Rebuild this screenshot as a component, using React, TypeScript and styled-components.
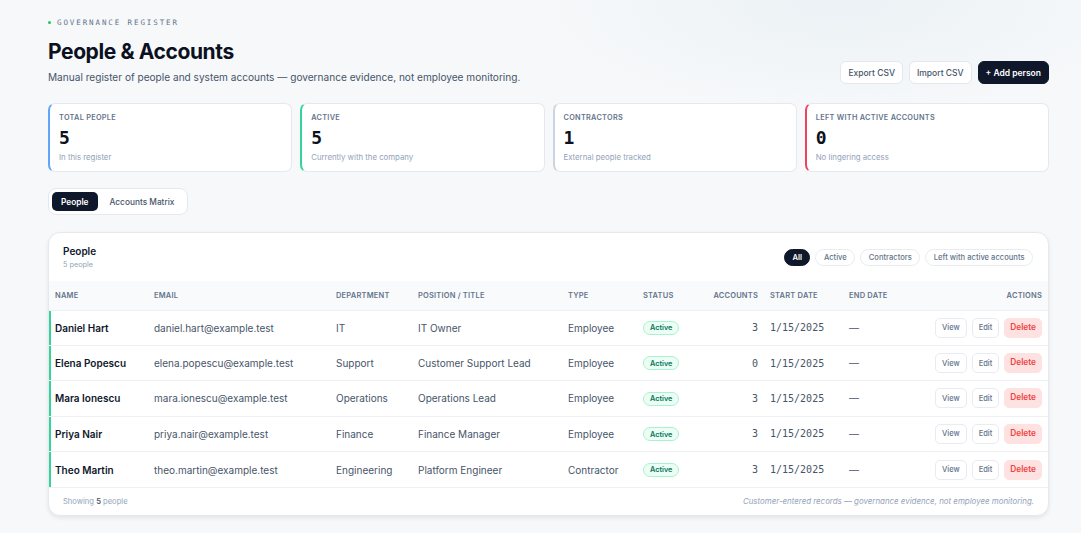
import * as React from 'react';
import styled, { createGlobalStyle } from 'styled-components';

const GlobalStyle = createGlobalStyle`
  html, body {
    margin: 0;
    padding: 0;
  }
  body {
    font-family: Inter, 'Noto Sans', sans-serif;
    background: #f6f8fa;
    color: #0f172a;
  }
  * {
    box-sizing: border-box;
  }
`;

type Person = {
  name: string;
  email: string;
  department: string;
  position: string;
  type: string;
  accounts: number;
  start: string;
};

const people: Person[] = [
  { name: 'Daniel Hart', email: 'daniel.hart@example.test', department: 'IT', position: 'IT Owner', type: 'Employee', accounts: 3, start: '1/15/2025' },
  { name: 'Elena Popescu', email: 'elena.popescu@example.test', department: 'Support', position: 'Customer Support Lead', type: 'Employee', accounts: 0, start: '1/15/2025' },
  { name: 'Mara Ionescu', email: 'mara.ionescu@example.test', department: 'Operations', position: 'Operations Lead', type: 'Employee', accounts: 3, start: '1/15/2025' },
  { name: 'Priya Nair', email: 'priya.nair@example.test', department: 'Finance', position: 'Finance Manager', type: 'Employee', accounts: 3, start: '1/15/2025' },
  { name: 'Theo Martin', email: 'theo.martin@example.test', department: 'Engineering', position: 'Platform Engineer', type: 'Contractor', accounts: 3, start: '1/15/2025' },
];

const stats = [
  { label: 'Total people', value: '5', sub: 'In this register', accent: '#60a5fa' },
  { label: 'Active', value: '5', sub: 'Currently with the company', accent: '#34d399' },
  { label: 'Contractors', value: '1', sub: 'External people tracked', accent: '#cbd5e1' },
  { label: 'Left with active accounts', value: '0', sub: 'No lingering access', accent: '#f43f5e' },
];

const filters = ['All', 'Active', 'Contractors', 'Left with active accounts'];

const mono = `'DejaVu Sans Mono', 'Liberation Mono', monospace`;

const StyledPage = styled.div`
  min-height: 533px;
  padding: 16px 32px 18px 48px;
  background:
    radial-gradient(ellipse 420px 160px at 78% 0%, rgba(226, 236, 240, 0.55), transparent 70%),
    #f6f8fa;
`;

const StyledTop = styled.div`
  display: flex;
  justify-content: space-between;
  align-items: flex-end;
`;

const StyledEyebrow = styled.div`
  display: flex;
  align-items: center;
  gap: 6px;
  font-family: ${mono};
  font-size: 7.5px;
  letter-spacing: 1.9px;
  color: #64748b;
  height: 13px;

  &::before {
    content: '';
    width: 3px;
    height: 3px;
    border-radius: 50%;
    background: #22c55e;
  }
`;

const StyledTitle = styled.h1`
  margin: 10px 0 0;
  font-size: 21px;
  font-weight: 700;
  letter-spacing: -0.4px;
  color: #0b1120;
  line-height: 26px;
`;

const StyledSubtitle = styled.p`
  margin: 5px 0 0;
  font-size: 10.1px;
  color: #475569;
  line-height: 14px;
`;

const StyledActions = styled.div`
  display: flex;
  gap: 6px;
`;

const StyledButton = styled.button<{ primary?: boolean }>`
  height: 23px;
  padding: 0 7px;
  border-radius: 6px;
  font-family: Inter, sans-serif;
  font-size: 8.5px;
  font-weight: ${({ primary }) => (primary ? 600 : 500)};
  border: 1px solid ${({ primary }) => (primary ? '#0f172a' : '#e5e7eb')};
  background: ${({ primary }) => (primary ? '#0f172a' : '#ffffff')};
  color: ${({ primary }) => (primary ? '#ffffff' : '#475569')};
`;

const StyledStats = styled.div`
  display: grid;
  grid-template-columns: repeat(4, 1fr);
  gap: 8px;
  margin-top: 19px;
`;

const StyledStatCard = styled.div<{ accent: string }>`
  height: 69px;
  background: #ffffff;
  border: 1px solid #e5e9ef;
  border-left: 2px solid ${({ accent }) => accent};
  border-radius: 7px;
  padding: 9px 9px;
`;

const StyledStatLabel = styled.div`
  font-size: 7.3px;
  font-weight: 600;
  letter-spacing: 0.3px;
  text-transform: uppercase;
  color: #64748b;
  line-height: 10px;
`;

const StyledStatValue = styled.div`
  font-family: ${mono};
  font-size: 18px;
  font-weight: 700;
  color: #0b1120;
  line-height: 22px;
  margin-top: 4px;
`;

const StyledStatSub = styled.div`
  font-size: 7.8px;
  color: #94a3b8;
  line-height: 10px;
  margin-top: 3px;
`;

const StyledTabs = styled.div`
  display: inline-flex;
  gap: 2px;
  margin-top: 16px;
  padding: 3px;
  background: #ffffff;
  border: 1px solid #e5e9ef;
  border-radius: 8px;
`;

const StyledTab = styled.div<{ active?: boolean }>`
  height: 19px;
  display: flex;
  align-items: center;
  padding: 0 ${({ active }) => (active ? '9px' : '10px')};
  border-radius: 5px;
  font-size: 8.3px;
  font-weight: ${({ active }) => (active ? 600 : 500)};
  background: ${({ active }) => (active ? '#0f172a' : 'transparent')};
  color: ${({ active }) => (active ? '#ffffff' : '#475569')};
`;

const StyledTableCard = styled.div`
  margin-top: 17px;
  background: #ffffff;
  border: 1px solid #e5e9ef;
  border-radius: 12px;
  box-shadow: 0 2px 4px rgba(15, 23, 42, 0.08);
  overflow: hidden;
`;

const StyledCardHeader = styled.div`
  display: flex;
  justify-content: space-between;
  align-items: center;
  padding: 12px 15px 11px 14px;
`;

const StyledCardTitle = styled.div`
  font-size: 10px;
  font-weight: 600;
  color: #0f172a;
  line-height: 13px;
`;

const StyledCardSub = styled.div`
  font-size: 7.3px;
  color: #94a3b8;
  line-height: 10px;
  margin-top: 2px;
`;

const StyledChips = styled.div`
  display: flex;
  gap: 5px;
`;

const StyledChip = styled.div<{ active?: boolean }>`
  height: 17px;
  display: flex;
  align-items: center;
  padding: 0 7.5px;
  border-radius: 9px;
  font-size: 7.6px;
  font-weight: ${({ active }) => (active ? 600 : 500)};
  border: 1px solid ${({ active }) => (active ? '#0f172a' : '#e8ebf0')};
  background: ${({ active }) => (active ? '#0f172a' : '#ffffff')};
  color: ${({ active }) => (active ? '#ffffff' : '#64748b')};
`;

const StyledTable = styled.table`
  width: 100%;
  border-collapse: collapse;
  table-layout: fixed;
`;

const StyledTh = styled.th<{ align?: string; width?: number }>`
  height: 29px;
  padding: 0 6px;
  background: #f8fafc;
  text-align: ${({ align = 'left' }) => align};
  font-size: 7.5px;
  font-weight: 600;
  letter-spacing: 0.2px;
  text-transform: uppercase;
  color: #64748b;
  width: ${({ width }) => (width ? `${width}px` : 'auto')};
`;

const StyledRow = styled.tr`
  border-top: 1px solid #eef0f3;

  & > td:first-child {
    box-shadow: inset 2px 0 0 #34d399;
  }
`;

const StyledTd = styled.td<{ align?: string; strong?: boolean; monoFont?: boolean }>`
  height: 35.4px;
  padding: 0 6px;
  text-align: ${({ align = 'left' }) => align};
  font-family: ${({ monoFont }) => (monoFont ? mono : 'Inter, sans-serif')};
  font-size: 10px;
  font-weight: ${({ strong }) => (strong ? 600 : 400)};
  color: ${({ strong }) => (strong ? '#0f172a' : '#475569')};
  white-space: nowrap;
`;

const StyledPill = styled.span`
  display: inline-flex;
  align-items: center;
  height: 14px;
  padding: 0 6px;
  border-radius: 7px;
  border: 1px solid #a7f3d0;
  background: #ecfdf5;
  color: #047857;
  font-size: 7.3px;
  font-weight: 600;
`;

const StyledRowActions = styled.div`
  display: flex;
  justify-content: flex-end;
  gap: 5px;
`;

const StyledRowButton = styled.button<{ danger?: boolean }>`
  height: 20px;
  padding: 0 ${({ danger }) => (danger ? '5px' : '6px')};
  min-width: ${({ danger }) => (danger ? '37px' : '0')};
  border-radius: 5px;
  font-family: Inter, sans-serif;
  font-size: ${({ danger }) => (danger ? '8.3px' : '7.5px')};
  font-weight: ${({ danger }) => (danger ? 600 : 500)};
  border: 1px solid ${({ danger }) => (danger ? '#fee2e2' : '#e8ebf0')};
  background: ${({ danger }) => (danger ? '#fee2e2' : '#ffffff')};
  color: ${({ danger }) => (danger ? '#ef4444' : '#64748b')};
  padding-bottom: ${({ danger }) => (danger ? '2px' : '0')};
`;

const StyledFooter = styled.div`
  display: flex;
  justify-content: space-between;
  align-items: center;
  height: 28px;
  padding: 0 14px;
  border-top: 1px solid #eef0f3;
  font-size: 7.6px;
  color: #94a3b8;

  b {
    color: #475569;
    font-weight: 600;
  }

  em {
    font-size: 7.9px;
    color: #94a3b8;
  }
`;

export default function App() {
  return (
    <StyledPage>
      <GlobalStyle />
      <StyledTop>
        <div>
          <StyledEyebrow>GOVERNANCE REGISTER</StyledEyebrow>
          <StyledTitle>People &amp; Accounts</StyledTitle>
          <StyledSubtitle>
            Manual register of people and system accounts — governance evidence, not employee monitoring.
          </StyledSubtitle>
        </div>
        <StyledActions>
          <StyledButton>Export CSV</StyledButton>
          <StyledButton>Import CSV</StyledButton>
          <StyledButton primary>+ Add person</StyledButton>
        </StyledActions>
      </StyledTop>

      <StyledStats>
        {stats.map((s) => (
          <StyledStatCard accent={s.accent} key={s.label}>
            <StyledStatLabel>{s.label}</StyledStatLabel>
            <StyledStatValue>{s.value}</StyledStatValue>
            <StyledStatSub>{s.sub}</StyledStatSub>
          </StyledStatCard>
        ))}
      </StyledStats>

      <StyledTabs>
        <StyledTab active>People</StyledTab>
        <StyledTab>Accounts Matrix</StyledTab>
      </StyledTabs>

      <StyledTableCard>
        <StyledCardHeader>
          <div>
            <StyledCardTitle>People</StyledCardTitle>
            <StyledCardSub>5 people</StyledCardSub>
          </div>
          <StyledChips>
            {filters.map((f) => (
              <StyledChip active={f === 'All'} key={f}>
                {f}
              </StyledChip>
            ))}
          </StyledChips>
        </StyledCardHeader>
        <StyledTable>
          <thead>
            <tr>
              <StyledTh width={99}>Name</StyledTh>
              <StyledTh width={182}>Email</StyledTh>
              <StyledTh width={82}>Department</StyledTh>
              <StyledTh width={150}>Position / Title</StyledTh>
              <StyledTh width={75}>Type</StyledTh>
              <StyledTh width={58}>Status</StyledTh>
              <StyledTh width={69} align="right">Accounts</StyledTh>
              <StyledTh width={79}>Start Date</StyledTh>
              <StyledTh width={80}>End Date</StyledTh>
              <StyledTh align="right">Actions</StyledTh>
            </tr>
          </thead>
          <tbody>
            {people.map((p) => (
              <StyledRow key={p.email}>
                <StyledTd strong>{p.name}</StyledTd>
                <StyledTd>{p.email}</StyledTd>
                <StyledTd>{p.department}</StyledTd>
                <StyledTd>{p.position}</StyledTd>
                <StyledTd>{p.type}</StyledTd>
                <StyledTd>
                  <StyledPill>Active</StyledPill>
                </StyledTd>
                <StyledTd align="right" monoFont>
                  {p.accounts}
                </StyledTd>
                <StyledTd monoFont>{p.start}</StyledTd>
                <StyledTd>—</StyledTd>
                <StyledTd>
                  <StyledRowActions>
                    <StyledRowButton>View</StyledRowButton>
                    <StyledRowButton>Edit</StyledRowButton>
                    <StyledRowButton danger>Delete</StyledRowButton>
                  </StyledRowActions>
                </StyledTd>
              </StyledRow>
            ))}
          </tbody>
        </StyledTable>
        <StyledFooter>
          <span>
            Showing <b>5</b> people
          </span>
          <em>Customer-entered records — governance evidence, not employee monitoring.</em>
        </StyledFooter>
      </StyledTableCard>
    </StyledPage>
  );
}
